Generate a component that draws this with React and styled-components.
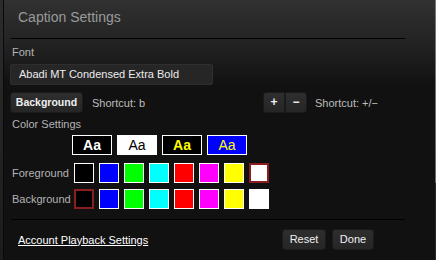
import React from "react";
import styled, { createGlobalStyle } from "styled-components";

const GlobalStyle = createGlobalStyle`
  html, body {
    margin: 0;
    padding: 0;
    background: #111;
  }
`;

const fgColors = ["#000", "#0000ff", "#00ff00", "#00ffff", "#ff0000", "#ff00ff", "#ffff00", "#fff"];
const bgColors = ["#000", "#0000ff", "#00ff00", "#00ffff", "#ff0000", "#ff00ff", "#ffff00", "#fff"];

const previews = [
  { bg: "#000", fg: "#fff", bold: true },
  { bg: "#fff", fg: "#000", bold: false },
  { bg: "#000", fg: "#ffff00", bold: true },
  { bg: "#0000ff", fg: "#ffff00", bold: false },
];

export default function App() {
  return (
    <>
      <GlobalStyle />
      <Frame>
        <Edge />
        <Panel>
          <Header>
            <Title>Caption Settings</Title>
          </Header>
          <Divider />
          <Body>
            <Label>Font</Label>
            <FontField>Abadi MT Condensed Extra Bold</FontField>

            <ButtonRow>
              <LeftGroup>
                <Button $w={73} $bold>Background</Button>
                <Hint>Shortcut: b</Hint>
              </LeftGroup>
              <Stepper>
                <StepButton $side="left">+</StepButton>
                <StepButton $side="right">−</StepButton>
              </Stepper>
              <Hint>Shortcut: +/−</Hint>
            </ButtonRow>

            <SectionLabel>Color Settings</SectionLabel>

            <PreviewRow>
              {previews.map((p, i) => (
                <Preview key={i} $bg={p.bg} $fg={p.fg} $bold={p.bold}>
                  Aa
                </Preview>
              ))}
            </PreviewRow>

            <SwatchRow $top={8}>
              <RowLabel>Foreground</RowLabel>
              {fgColors.map((c, i) => (
                <Swatch key={i} $color={c} $selected={i === 7} />
              ))}
            </SwatchRow>

            <SwatchRow $top={6}>
              <RowLabel>Background</RowLabel>
              {bgColors.map((c, i) => (
                <Swatch key={i} $color={c} $selected={i === 0} />
              ))}
            </SwatchRow>
          </Body>
          <Divider $top={10} />
          <Footer>
            <AccountLink href="#">Account Playback Settings</AccountLink>
            <FooterButtons>
              <Button $w={44}>Reset</Button>
              <Button $w={42}>Done</Button>
            </FooterButtons>
          </Footer>
          <Scrollbar />
        </Panel>
      </Frame>
    </>
  );
}

const Frame = styled.div`
  display: flex;
  width: 436px;
  height: 260px;
  overflow: hidden;
  font-family: "Liberation Sans", Arial, sans-serif;
`;

const Edge = styled.div`
  width: 3px;
  background: linear-gradient(#2c2c2c, #1c1c1c);
`;

const Panel = styled.div`
  position: relative;
  flex: 1;
  border-left: 1px solid #0a0a0a;
  background: linear-gradient(#313131 0px, #242424 40px, #111 85px, #111 100%);
`;

const Header = styled.div`
  height: 38px;
  box-sizing: border-box;
  padding: 9px 0 0 14px;
`;

const Title = styled.div`
  font-size: 14px;
  line-height: 16px;
  color: #9a9a9a;
`;

const Divider = styled.div`
  margin: ${(p) => p.$top || 0}px 0 0 7px;
  width: 394px;
  height: 1px;
  background: #000;
`;

const Body = styled.div`
  padding: 7px 0 0 6px;
  display: flex;
  flex-direction: column;
`;

const Label = styled.div`
  font-size: 11px;
  line-height: 13px;
  color: #b4b4b4;
  padding-left: 2px;
`;

const SectionLabel = styled(Label)`
  margin-top: 5px;
`;

const FontField = styled.div`
  margin-top: 5px;
  width: 203px;
  height: 21px;
  box-sizing: border-box;
  border: 1px solid #2e2e2e;
  border-radius: 2px;
  background: #262626;
  color: #ececec;
  font-size: 11px;
  line-height: 19px;
  padding-left: 8px;
`;

const ButtonRow = styled.div`
  margin-top: 7px;
  display: flex;
  align-items: center;
  height: 21px;
`;

const LeftGroup = styled.div`
  width: 253px;
  display: flex;
  align-items: center;
  gap: 9px;
`;

const Button = styled.div`
  width: ${(p) => p.$w}px;
  height: 21px;
  box-sizing: border-box;
  border: 1px solid #1a1a1a;
  border-radius: 3px;
  background: linear-gradient(#2e2e2e, #262626);
  color: #f0f0f0;
  font-size: ${(p) => (p.$bold ? "10.5px" : "11px")};
  font-weight: ${(p) => (p.$bold ? "bold" : "normal")};
  line-height: 19px;
  text-align: center;
`;

const Stepper = styled.div`
  display: flex;
  margin-right: 8px;
`;

const StepButton = styled.div`
  width: 22px;
  height: 21px;
  box-sizing: border-box;
  border: 1px solid #1a1a1a;
  border-radius: ${(p) => (p.$side === "left" ? "3px 0 0 3px" : "0 3px 3px 0")};
  background: linear-gradient(#2e2e2e, #262626);
  color: #f0f0f0;
  font-size: 12px;
  font-weight: bold;
  line-height: 19px;
  text-align: center;
`;

const Hint = styled.span`
  font-size: 11px;
  color: #bdbdbd;
`;

const PreviewRow = styled.div`
  margin: 4px 0 0 62px;
  display: flex;
  gap: 5px;
`;

const Preview = styled.div`
  width: 40px;
  height: 20px;
  box-sizing: border-box;
  border: 1px solid #fff;
  background: ${(p) => p.$bg};
  color: ${(p) => p.$fg};
  font-size: 14px;
  font-weight: ${(p) => (p.$bold ? "bold" : "normal")};
  line-height: 18px;
  text-align: center;
`;

const SwatchRow = styled.div`
  margin-top: ${(p) => p.$top}px;
  display: flex;
  align-items: center;
  gap: 5px;
  height: 20px;
`;

const RowLabel = styled.div`
  width: 57px;
  padding-left: 2px;
  font-size: 11px;
  color: #b4b4b4;
  white-space: nowrap;
`;

const Swatch = styled.div`
  width: 20px;
  height: 20px;
  box-sizing: border-box;
  background: ${(p) => p.$color};
  border: ${(p) => (p.$selected ? "2px solid #8a1d1d" : "1px solid #fff")};
`;

const Footer = styled.div`
  margin-top: 9px;
  display: flex;
  align-items: center;
  padding: 0 62px 0 14px;
`;

const AccountLink = styled.a`
  flex: 1;
  font-size: 11px;
  color: #fff;
  text-decoration: underline;
`;

const FooterButtons = styled.div`
  display: flex;
  gap: 6px;
`;

const Scrollbar = styled.div`
  position: absolute;
  top: 0;
  right: 0;
  width: 1px;
  height: 100%;
  background: linear-gradient(#7a7a7a 0px, #6a6a6a 183px, #262626 183px);
`;
